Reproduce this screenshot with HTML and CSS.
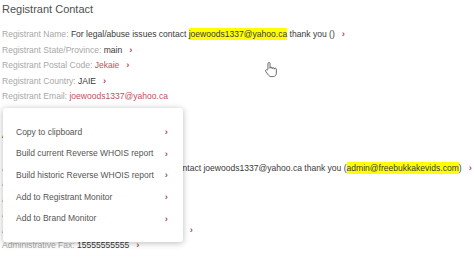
FILE: index.html
```html
<!DOCTYPE html>
<html lang="en">
<head>
<meta charset="UTF-8">
<title>Registrant Contact</title>
<link rel="stylesheet" href="styles.css">
</head>
<body>

<div class="contact-page">
    <h2 class="section-title">Registrant Contact</h2>
    <div class="row"><span class="label">Registrant Name:</span> <span class="value">For legal/abuse issues contact <mark class="hl">joewoods1337@yahoo.ca</mark> thank you ()</span><span class="chev">›</span></div>
    <div class="row"><span class="label">Registrant State/Province:</span> <span class="value">main</span><span class="chev">›</span></div>
    <div class="row"><span class="label">Registrant Postal Code:</span> <span class="value red">Jekaie</span><span class="chev">›</span></div>
    <div class="row"><span class="label">Registrant Country:</span> <span class="value">JAIE</span><span class="chev">›</span></div>
    <div class="row"><span class="label">Registrant Email:</span> <span class="value red">joewoods1337@yahoo.ca</span></div>

    <h2 class="section-title second">Administrative Contact</h2>
    <div class="row"><span class="label">Administrative Name:</span> <span class="value">For legal/abuse issues contact joewoods1337@yahoo.ca thank you (<mark class="hl">admin@freebukkakevids.com</mark>)</span><span class="chev">›</span></div>
    <div class="row"><span class="label">Administrative State/Province:</span> <span class="value">main</span><span class="chev">›</span></div>
    <div class="row"><span class="label">Administrative Postal Code:</span> <span class="value red">Jekaie</span><span class="chev">›</span></div>
    <div class="row"><span class="label">Administrative Country:</span> <span class="value">JAIE</span><span class="chev">›</span></div>
    <div class="row"><span class="label">Administrative Email:</span> <span class="value red">joewoods1337@yahoo.ca</span><span class="chev">›</span></div>
    <div class="row"><span class="label">Administrative Fax:</span> <span class="value">15555555555</span><span class="chev">›</span></div>
</div>

<!-- menu contextuel ouvert sur l'email -->
<ul class="context-menu">
    <li>Copy to clipboard <span class="chev">›</span></li>
    <li>Build current Reverse WHOIS report <span class="chev">›</span></li>
    <li>Build historic Reverse WHOIS report <span class="chev">›</span></li>
    <li>Add to Registrant Monitor <span class="chev">›</span></li>
    <li>Add to Brand Monitor <span class="chev">›</span></li>
</ul>

<svg class="cursor" width="14" height="18" viewBox="0 0 16 19">
    <path d="M4.5 9V2.2a1.2 1.2 0 0 1 2.4 0V7.5a1.2 1.2 0 0 1 2.4 0V8a1.2 1.2 0 0 1 2.4 0v.6a1.2 1.2 0 0 1 2.4 0V13c0 2.5-1.5 4-3.5 4H8c-1.5 0-2.3-.8-3.2-2L2 11a1.1 1.1 0 0 1 1.6-1.5Z" fill="#fff" stroke="#555" stroke-width="1"/>
</svg>

</body>
</html>
```

FILE: styles.css
```css
body {
    margin: 0;
    background: #fff;
    font-family: "Liberation Sans", Arial, sans-serif;
    color: #3c3c3c;
}
.contact-page {
    padding-left: 2px;
}
.section-title {
    font-size: 11px;
    font-weight: normal;
    color: #505050;
    line-height: 18px;
    margin: 0 0 9px 0;
}
.section-title.second {
    margin-top: 20px;
    margin-bottom: 18px;
}
.row {
    font-size: 8.55px;
    line-height: 15.5px;
    height: 15.5px;
    white-space: nowrap;
}
.label {
    color: #a8a8a8;
}
.value {
    color: #3a3a3a;
}
.value.red {
    color: #c4505c;
}
.hl {
    background: #ffff00;
    color: #3a3a3a;
    padding: 1px 0;
}
.chev {
    color: #b04c68;
    font-weight: bold;
    font-size: 9.5px;
    line-height: 1;
    margin-left: 7px;
}
/* menu */
.context-menu {
    position: absolute;
    left: 3px;
    top: 108px;
    width: 180px;
    margin: 0;
    padding: 13px 0;
    list-style: none;
    background: #fff;
    border-radius: 3px;
    box-shadow: 0 1px 6px rgba(0, 0, 0, 0.28);
}
.context-menu li {
    display: flex;
    justify-content: space-between;
    align-items: center;
    height: 21.67px;
    padding: 0 15px 0 13px;
    font-size: 8.5px;
    color: #555;
}
.context-menu .chev {
    margin-left: 0;
}
.cursor {
    position: absolute;
    left: 264px;
    top: 61px;
}
```
